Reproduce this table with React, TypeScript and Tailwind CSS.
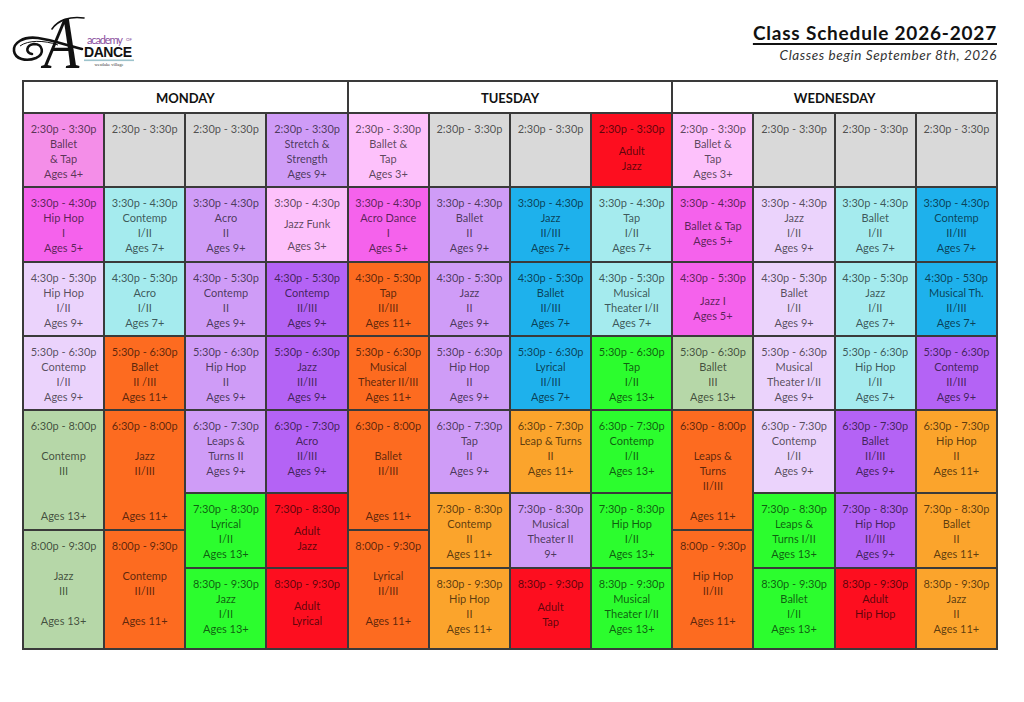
const pink = 'bg-[#f48ee8]';
const grey = 'bg-[#d9d9d9]';
const lav = 'bg-[#cf9cf7]';
const mag = 'bg-[#f562ec]';
const cyan = 'bg-[#a5ebee]';
const lpink = 'bg-[#fdc1fb]';
const vlav = 'bg-[#ebd3fc]';
const purp = 'bg-[#b463f5]';
const orange = 'bg-[#fd6b20]';
const lorange = 'bg-[#fba42c]';
const green = 'bg-[#2cfd2e]';
const red = 'bg-[#fd0e1f]';
const sage = 'bg-[#b6d7a8]';
const blue = 'bg-[#1eb1ec]';

type Line = string | number;

interface Slot {
  bg: string;
  t: string;
  l: Line[];
  span?: string;
}

const spacer: Record<number, string> = {
  6: 'h-[6px]',
  7: 'h-[7px]',
  8: 'h-[8px]',
  15: 'h-[15px]',
};

const days = ['MONDAY', 'TUESDAY', 'WEDNESDAY'];

const t1 = '2:30p - 3:30p';
const t2 = '3:30p - 4:30p';
const t3 = '4:30p - 5:30p';
const t4 = '5:30p - 6:30p';
const t65 = '6:30p - 7:30p';
const t75 = '7:30p - 8:30p';
const t85 = '8:30p - 9:30p';
const t68 = '6:30p - 8:00p';
const t89 = '8:00p - 9:30p';

// first four hour rows, left to right
const rows: Slot[][] = [
  [
    { bg: pink, t: t1, l: ['Ballet', '& Tap', 'Ages 4+'] },
    { bg: grey, t: t1, l: [] },
    { bg: grey, t: t1, l: [] },
    { bg: lav, t: t1, l: ['Stretch &', 'Strength', 'Ages 9+'] },
    { bg: lpink, t: t1, l: ['Ballet &', 'Tap', 'Ages 3+'] },
    { bg: grey, t: t1, l: [] },
    { bg: grey, t: t1, l: [] },
    { bg: red, t: t1, l: [7, 'Adult', 'Jazz'] },
    { bg: lpink, t: t1, l: ['Ballet &', 'Tap', 'Ages 3+'] },
    { bg: grey, t: t1, l: [] },
    { bg: grey, t: t1, l: [] },
    { bg: grey, t: t1, l: [] },
  ],
  [
    { bg: mag, t: t2, l: ['Hip Hop', 'I', 'Ages 5+'] },
    { bg: cyan, t: t2, l: ['Contemp', 'I/II', 'Ages 7+'] },
    { bg: lav, t: t2, l: ['Acro', 'II', 'Ages 9+'] },
    { bg: lpink, t: t2, l: [6, 'Jazz Funk', 7, 'Ages 3+'] },
    { bg: mag, t: t2, l: ['Acro Dance', 'I', 'Ages 5+'] },
    { bg: lav, t: t2, l: ['Ballet', 'II', 'Ages 9+'] },
    { bg: blue, t: t2, l: ['Jazz', 'II/III', 'Ages 7+'] },
    { bg: cyan, t: t2, l: ['Tap', 'I/II', 'Ages 7+'] },
    { bg: mag, t: t2, l: [8, 'Ballet & Tap', 'Ages 5+'] },
    { bg: vlav, t: t2, l: ['Jazz', 'I/II', 'Ages 9+'] },
    { bg: cyan, t: t2, l: ['Ballet', 'I/II', 'Ages 7+'] },
    { bg: blue, t: t2, l: ['Contemp', 'II/III', 'Ages 7+'] },
  ],
  [
    { bg: vlav, t: t3, l: ['Hip Hop', 'I/II', 'Ages 9+'] },
    { bg: cyan, t: t3, l: ['Acro', 'I/II', 'Ages 7+'] },
    { bg: lav, t: t3, l: ['Contemp', 'II', 'Ages 9+'] },
    { bg: purp, t: t3, l: ['Contemp', 'II/III', 'Ages 9+'] },
    { bg: orange, t: t3, l: ['Tap', 'II/III', 'Ages 11+'] },
    { bg: lav, t: t3, l: ['Jazz', 'II', 'Ages 9+'] },
    { bg: blue, t: t3, l: ['Ballet', 'II/III', 'Ages 7+'] },
    { bg: cyan, t: t3, l: ['Musical', 'Theater I/II', 'Ages 7+'] },
    { bg: mag, t: t3, l: [8, 'Jazz I', 'Ages 5+'] },
    { bg: vlav, t: t3, l: ['Ballet', 'I/II', 'Ages 9+'] },
    { bg: cyan, t: t3, l: ['Jazz', 'I/II', 'Ages 7+'] },
    { bg: blue, t: '4:30p - 530p', l: ['Musical Th.', 'II/III', 'Ages 7+'] },
  ],
  [
    { bg: vlav, t: t4, l: ['Contemp', 'I/II', 'Ages 9+'] },
    { bg: orange, t: t4, l: ['Ballet', 'II /III', 'Ages 11+'] },
    { bg: lav, t: t4, l: ['Hip Hop', 'II', 'Ages 9+'] },
    { bg: purp, t: t4, l: ['Jazz', 'II/III', 'Ages 9+'] },
    { bg: orange, t: t4, l: ['Musical', 'Theater II/III', 'Ages 11+'] },
    { bg: lav, t: t4, l: ['Hip Hop', 'II', 'Ages 9+'] },
    { bg: blue, t: t4, l: ['Lyrical', 'II/III', 'Ages 7+'] },
    { bg: green, t: t4, l: ['Tap', 'I/II', 'Ages 13+'] },
    { bg: sage, t: t4, l: ['Ballet', 'III', 'Ages 13+'] },
    { bg: vlav, t: t4, l: ['Musical', 'Theater I/II', 'Ages 9+'] },
    { bg: cyan, t: t4, l: ['Hip Hop', 'I/II', 'Ages 7+'] },
    { bg: purp, t: t4, l: ['Contemp', 'II/III', 'Ages 9+'] },
  ],
];

const long = (bg: string, a: Line[], b: Line[]): Slot[] => [
  { bg, t: t68, l: a, span: 'row-span-2' },
  { bg, t: t89, l: b, span: 'row-span-2' },
];

// evening block, one stack per column
const evening: Slot[][] = [
  long(sage, [15, 'Contemp', 'III', 15, 15, 'Ages 13+'], [15, 'Jazz', 'III', 15, 'Ages 13+']),
  long(orange, [15, 'Jazz', 'II/III', 15, 15, 'Ages 11+'], [15, 'Contemp', 'II/III', 15, 'Ages 11+']),
  [
    { bg: lav, t: t65, l: ['Leaps &', 'Turns II', 'Ages 9+'] },
    { bg: green, t: t75, l: ['Lyrical', 'I/II', 'Ages 13+'], span: 'row-span-2' },
    { bg: green, t: t85, l: ['Jazz', 'I/II', 'Ages 13+'] },
  ],
  [
    { bg: purp, t: t65, l: ['Acro', 'II/III', 'Ages 9+'] },
    { bg: red, t: t75, l: [7, 'Adult', 'Jazz'], span: 'row-span-2' },
    { bg: red, t: t85, l: [7, 'Adult', 'Lyrical'] },
  ],
  long(orange, [15, 'Ballet', 'II/III', 15, 15, 'Ages 11+'], [15, 'Lyrical', 'II/III', 15, 'Ages 11+']),
  [
    { bg: lav, t: t65, l: ['Tap', 'II', 'Ages 9+'] },
    { bg: lorange, t: t75, l: ['Contemp', 'II', 'Ages 11+'], span: 'row-span-2' },
    { bg: lorange, t: t85, l: ['Hip Hop', 'II', 'Ages 11+'] },
  ],
  [
    { bg: lorange, t: t65, l: ['Leap & Turns', 'II', 'Ages 11+'] },
    { bg: lav, t: t75, l: ['Musical', 'Theater II', '9+'], span: 'row-span-2' },
    { bg: red, t: t85, l: [8, 'Adult', 'Tap'] },
  ],
  [
    { bg: green, t: t65, l: ['Contemp', 'I/II', 'Ages 13+'] },
    { bg: green, t: t75, l: ['Hip Hop', 'I/II', 'Ages 13+'], span: 'row-span-2' },
    { bg: green, t: t85, l: ['Musical', 'Theater I/II', 'Ages 13+'] },
  ],
  long(orange, [15, 'Leaps &', 'Turns', 'II/III', 15, 'Ages 11+'], [15, 'Hip Hop', 'II/III', 15, 'Ages 11+']),
  [
    { bg: vlav, t: t65, l: ['Contemp', 'I/II', 'Ages 9+'] },
    { bg: green, t: t75, l: ['Leaps &', 'Turns I/II', 'Ages 13+'], span: 'row-span-2' },
    { bg: green, t: t85, l: ['Ballet', 'I/II', 'Ages 13+'] },
  ],
  [
    { bg: purp, t: t65, l: ['Ballet', 'II/III', 'Ages 9+'] },
    { bg: purp, t: t75, l: ['Hip Hop', 'II/III', 'Ages 9+'], span: 'row-span-2' },
    { bg: red, t: t85, l: ['Adult', 'Hip Hop'] },
  ],
  [
    { bg: lorange, t: t65, l: ['Hip Hop', 'II', 'Ages 11+'] },
    { bg: lorange, t: t75, l: ['Ballet', 'II', 'Ages 11+'], span: 'row-span-2' },
    { bg: lorange, t: t85, l: ['Jazz', 'II', 'Ages 11+'] },
  ],
];

function ClassCell({ slot }: { slot: Slot }) {
  return (
    <div className={`${slot.bg} ${slot.span ?? ''} flex flex-col items-center pt-[7px] text-center text-[11px] leading-[15px] text-black/65 whitespace-nowrap`}>
      <div>{slot.t}</div>
      {slot.l.map((line, i) =>
        typeof line === 'number' ? (
          <div key={i} className={spacer[line]} />
        ) : (
          <div key={i}>{line}</div>
        ),
      )}
    </div>
  );
}

function Logo() {
  return (
    <svg width="130" height="60" viewBox="0 0 130 60" overflow="visible" className="mt-[15px]">
      {/* swirl crossbar and loops */}
      <path
        d="M72 34 C 56 30, 42 25, 28 23 C 13 21, 3 28, 4 36 C 5 44, 16 47, 26 43 C 35 39, 33 29, 24 29 C 16 30, 15 38, 22 39"
        fill="none"
        stroke="#111"
        strokeWidth="2.6"
        strokeLinecap="round"
      />
      <path d="M10 31 C 18 25, 34 25, 48 30" fill="none" stroke="#111" strokeWidth="1" />
      <path d="M42 14 C 48 5, 60 1, 74 3" fill="none" stroke="#111" strokeWidth="1.6" strokeLinecap="round" />
      <text
        transform="translate(34 53) scale(0.78 1)"
        fontFamily="'Liberation Serif', serif"
        fontStyle="italic"
        fontSize="74"
        fill="#111"
      >
        A
      </text>
      <text x="77" y="29" fontFamily="Lato, sans-serif" fontSize="11" fill="#8a4f9e" textLength="36">
        academy
      </text>
      <text x="116" y="26" fontFamily="Lato, sans-serif" fontSize="4.5" fill="#8a4f9e">
        OF
      </text>
      <text x="74" y="42" fontFamily="'Liberation Sans', sans-serif" fontWeight="700" fontSize="14" fill="#111" textLength="48">
        DANCE
      </text>
      <rect x="74" y="44.5" width="50" height="1.6" fill="#9cc3cc" />
      <text x="99" y="51" fontFamily="'Liberation Serif', serif" fontSize="4.5" fill="#333" textAnchor="middle">
        westlake village
      </text>
    </svg>
  );
}

export default function App() {
  return (
    <div className="w-[1024px] h-[702px] bg-white text-black" style={{ fontFamily: 'Lato, "Open Sans", sans-serif' }}>
      <div className="flex justify-between h-[80px] pl-[10px] pr-[27px]">
        <Logo />
        <div className="pt-[20px] text-right">
          <div className="text-[19px] leading-[25px] font-bold tracking-[0.8px] underline underline-offset-[3px] decoration-[1.5px] text-[#111]">
            Class Schedule 2026-2027
          </div>
          <div className="mt-[2px] text-[13.5px] leading-[16px] italic tracking-[0.6px] text-[#333]">
            Classes begin September 8th, 2026
          </div>
        </div>
      </div>

      <div className="ml-[22px] w-[976px] grid grid-cols-12 grid-rows-[30px_72px_73px_72px_72px_237px] gap-[2px] p-[2px] bg-[#3a3a3a]">
        {days.map((d) => (
          <div key={d} className="col-span-4 bg-white flex items-center justify-center pt-[3px] text-[13px] font-bold text-[#111]">
            {d}
          </div>
        ))}
        {rows.flat().map((slot, i) => (
          <ClassCell key={i} slot={slot} />
        ))}
        {evening.map((stack, i) => (
          <div key={i} className="grid grid-rows-[81px_35px_36px_79px] gap-[2px] bg-[#3a3a3a]">
            {stack.map((slot, j) => (
              <ClassCell key={j} slot={slot} />
            ))}
          </div>
        ))}
      </div>
    </div>
  );
}
